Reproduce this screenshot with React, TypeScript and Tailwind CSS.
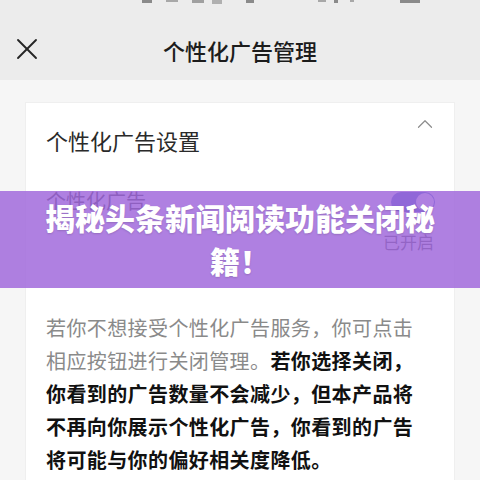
import { X, ChevronUp } from "lucide-react";

const cjk = { fontFamily: '"Noto Sans CJK SC", "Noto Sans", sans-serif' };

// status bar icons that peek out above the nav bar
const StatusBar = () => (
    <div className="h-[6px] flex items-start">
        <div className="ml-[142px] w-[10px] h-[3px] bg-[#8a8a8a]" />
        <div className="ml-[14px] w-[12px] h-[2px] bg-[#a8a8a8]" />
        <div className="ml-[14px] w-[12px] h-[3px] bg-[#a0a0a0]" />
        <div className="ml-[8px] w-[10px] h-[4px] bg-[#b0b0b0]" />
        <div className="ml-[24px] w-[8px] h-[3px] bg-[#8a8a8a]" />
        <div className="ml-[64px] w-[8px] h-[2px] bg-[#a8a8a8]" />
        <div className="ml-[8px] w-[4px] h-[3px] bg-[#8a8a8a]" />
        <div className="ml-[12px] w-[4px] h-[2px] bg-[#a8a8a8]" />
        <div className="ml-[46px] w-[20px] h-[3px] bg-[#8a8a8a]" />
    </div>
);

const App = () => {
    return (
        <div className="relative w-[480px] h-[480px] overflow-hidden bg-[#f6f6f6]" style={cjk}>
            <header className="bg-[#ececec] h-[80px]">
                <StatusBar />
                <div className="relative h-[74px] flex items-center justify-center">
                    <X className="absolute left-[9px] top-[25px] w-[36px] h-[36px] text-[#262626]" strokeWidth={1.25} />
                    <h1 className="text-[22px] leading-[30px] text-[#1c1c1c] font-medium mt-[14px]">个性化广告管理</h1>
                </div>
            </header>

            <section className="mt-[22px] mx-[25px] bg-white border border-[#efefef] px-[20px] pt-[12px] h-[420px]">
                <div className="flex justify-between items-start">
                    <h2 className="mt-[10px] text-[22px] leading-[30px] text-[#2a2a2a]">个性化广告设置</h2>
                    <ChevronUp className="w-[26px] h-[26px] text-[#8c8c8c] -mr-[4px] -mt-[4px]" strokeWidth={1.1} />
                </div>

                <div className="mt-[26px] flex justify-between items-start">
                    <span className="mt-[6px] text-[20px] leading-[28px] text-[#333]">个性化广告</span>
                    <div className="flex flex-col items-end">
                        <div className="w-[44px] h-[20px] rounded-full bg-[#3f66c8] relative mt-[11px] mr-[-1px]">
                            <div className="absolute right-[1px] top-[1px] w-[18px] h-[18px] rounded-full bg-white" />
                        </div>
                        <span className="mt-[18px] text-[17px] leading-[24px] text-[#555]">已开启</span>
                    </div>
                </div>

                <p className="mt-[57px] w-[374px] text-[20px] leading-[33px] tracking-[0.4px]">
                    <span className="text-[#8a8a8a]">若你不想接受个性化广告服务，你可点击相应按钮进行关闭管理。</span>
                    <span className="font-bold text-[#111]">
                        若你选择关闭，你看到的广告数量不会减少，但本产品将不再向你展示个性化广告，你看到的广告将可能与你的偏好相关度降低。
                    </span>
                </p>
            </section>

            <div className="absolute left-0 right-0 top-[191px] h-[97px] bg-[rgba(160,104,219,0.84)] px-[35px] py-[5px] text-center">
                <p className="text-white text-[30px] leading-[43px] font-black [text-shadow:0_1px_2px_rgba(0,0,0,0.15)]">
                    揭秘头条新闻阅读功能关闭秘籍！
                </p>
            </div>
        </div>
    );
};

export default App;
